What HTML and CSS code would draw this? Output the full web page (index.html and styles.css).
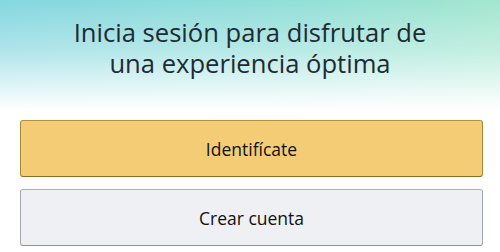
FILE: index.html
```html
<!DOCTYPE html>
<html lang="es">
<head>
<meta charset="utf-8">
<link rel="stylesheet" href="styles.css">
</head>
<body>
<div class="page">
  <header class="hero">
    <h1 class="title">Inicia sesión para disfrutar de<br>una experiencia óptima</h1>
  </header>
  <div class="actions">
    <button class="btn btn-primary">Identifícate</button>
    <button class="btn btn-secondary">Crear cuenta</button>
  </div>
</div>
</body>
</html>
```
FILE: styles.css
```css
html, body {
  margin: 0;
  padding: 0;
  background: #ffffff;
}
body {
  font-family: "Open Sans", "Noto Sans", sans-serif;
  color: #111111;
  width: 500px;
  height: 252px;
  overflow: hidden;
}
.hero {
  height: 110px;
  background:
    linear-gradient(to bottom, rgba(255,255,255,0) 0%, rgba(255,255,255,0.35) 45%, #ffffff 100%),
    linear-gradient(to right, #84d6e0 0%, #93dfd8 60%, #a3e6cf 100%);
  display: flex;
  justify-content: center;
  padding-top: 17px;
  box-sizing: border-box;
}
.title {
  margin: 0;
  font-weight: 400;
  font-size: 25.6px;
  line-height: 31px;
  text-align: center;
  color: #1f2a33;
}
.actions {
  display: flex;
  flex-direction: column;
  gap: 12px;
  padding: 10px 17px 0 20px;
}
.btn {
  height: 57px;
  border-radius: 3px;
  font-family: inherit;
  font-size: 17.5px;
  color: #111111;
  cursor: pointer;
  width: 100%;
}
.btn-primary {
  background: #f4cc75;
  border: 1px solid #a88734;
  border-color: #b3913f #a88734 #8c6d1f;
}
.btn-secondary {
  background: #eff0f3;
  border: 1px solid #adb1b8;
  border-color: #adb1b8 #a2a6ac #8d9096;
}
```
